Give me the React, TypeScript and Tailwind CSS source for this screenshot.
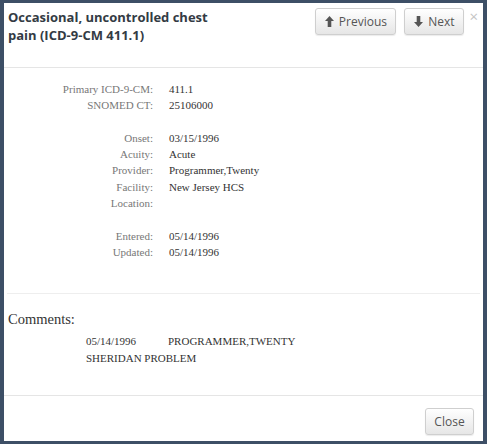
import React from "react";

const rows: [string, string][] = [
  ["Primary ICD-9-CM:", "411.1"],
  ["SNOMED CT:", "25106000"],
  ["", ""],
  ["Onset:", "03/15/1996"],
  ["Acuity:", "Acute"],
  ["Provider:", "Programmer,Twenty"],
  ["Facility:", "New Jersey HCS"],
  ["Location:", ""],
  ["", ""],
  ["Entered:", "05/14/1996"],
  ["Updated:", "05/14/1996"],
];

function ArrowUp() {
  return (
    <svg viewBox="0 0 10 12" className="w-[9px] h-[11px] shrink-0" fill="currentColor">
      <path d="M5 0L0 5.5h3V12h4V5.5h3z" />
    </svg>
  );
}

function ArrowDown() {
  return (
    <svg viewBox="0 0 10 12" className="w-[9px] h-[11px] shrink-0" fill="currentColor">
      <path d="M5 12L0 6.5h3V0h4v6.5h3z" />
    </svg>
  );
}

const btn =
  "flex items-center justify-center gap-[5px] h-[27px] rounded-[3px] border border-[#cfcfcf] bg-gradient-to-b from-white to-[#e6e6e6] text-[12px] text-[#555] shadow-[0_1px_1px_rgba(0,0,0,0.08)]";

export default function App() {
  return (
    <div className="w-[487px] h-[444px] bg-[#3d4f66] pt-[3px] pl-[4px] pr-[4px] pb-[3px]">
      <div className="h-full bg-white flex flex-col" style={{ fontFamily: "'Liberation Serif', serif" }}>
        <div className="h-[65px] shrink-0 border-b border-[#e5e5e5] flex items-start pl-[4px] pr-[5px] pt-[5px]">
          <h4
            className="flex-1 text-[13px] leading-[18px] font-bold text-[#333b44]"
            style={{ fontFamily: "'Open Sans', sans-serif" }}
          >
            Occasional, uncontrolled chest
            <br />
            pain (ICD-9-CM 411.1)
          </h4>
          <div className="flex items-start" style={{ fontFamily: "'Open Sans', sans-serif" }}>
            <button className={btn + " w-[81px]"}>
              <ArrowUp />
              Previous
            </button>
            <button className={btn + " w-[60px] ml-[8px]"}>
              <ArrowDown />
              Next
            </button>
            <span className="text-[15px] leading-[15px] text-[#c4c4c4] ml-[5px] mt-[1px]">×</span>
          </div>
        </div>

        <div className="pt-[13px] pl-[4px]">
          <div className="grid grid-cols-[145px_1fr] gap-x-[16px] text-[11px] leading-[16.3px]">
            {rows.map(([k, v], i) => (
              <React.Fragment key={i}>
                <div className="text-right text-[#777] h-[16.3px]">{k}</div>
                <div className="text-[#333] h-[16.3px]">{v}</div>
              </React.Fragment>
            ))}
          </div>
        </div>

        <div className="mt-[33px] mx-[3px] border-t border-[#eeeeee]" />

        <div className="pl-[4px] pt-[16px] text-[14.5px] leading-[18px] text-[#333]">Comments:</div>
        <div className="pl-[82px] pt-[5px] text-[11px] leading-[17px] text-[#333]">
          <div className="flex">
            <span className="w-[82px]">05/14/1996</span>
            <span>PROGRAMMER,TWENTY</span>
          </div>
          <div>SHERIDAN PROBLEM</div>
        </div>

        <div className="flex-1" />
        <div className="h-[46px] shrink-0 border-t border-[#e5e5e5] flex justify-end items-start pt-[12px] pr-[9px]">
          <button className={btn + " w-[49px]"} style={{ fontFamily: "'Open Sans', sans-serif" }}>
            Close
          </button>
        </div>
      </div>
    </div>
  );
}
